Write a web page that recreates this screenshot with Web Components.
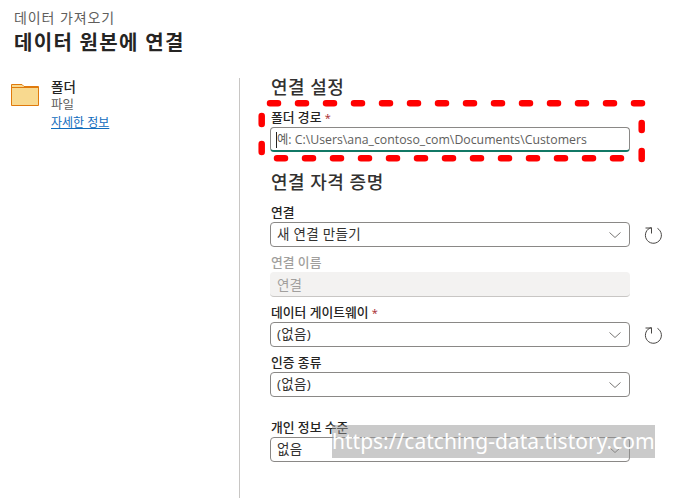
<!DOCTYPE html>
<html lang="ko">
<head>
<meta charset="utf-8">
<title>데이터 원본에 연결</title>
<style>
  html, body { margin: 0; height: 100%; background: #fff; }
  body { font-family: "Open Sans", "Noto Sans CJK KR", sans-serif; color: #252423; overflow: hidden; }
</style>
</head>
<body>
<connect-page>
  <page-header slot="header" crumb="데이터 가져오기" title="데이터 원본에 연결"></page-header>
  <source-card slot="side" name="폴더" kind="파일" link="자세한 정보"></source-card>

  <section-title style="line-height:18px">연결 설정</section-title>
  <form-field label="폴더 경로" required style="margin-top:11px">
    <text-input placeholder="예: C:\Users\ana_contoso_com\Documents\Customers" active></text-input>
  </form-field>

  <section-title style="margin-top:19px">연결 자격 증명</section-title>
  <form-field label="연결" style="margin-top:9px">
    <select-box value="새 연결 만들기" refresh></select-box>
  </form-field>
  <form-field label="연결 이름" disabled style="margin-top:5px">
    <text-input value="연결" disabled></text-input>
  </form-field>
  <form-field label="데이터 게이트웨이" required style="margin-top:5px">
    <select-box value="(없음)" refresh></select-box>
  </form-field>
  <form-field label="인증 종류" style="margin-top:5px">
    <select-box value="(없음)"></select-box>
  </form-field>
  <form-field label="개인 정보 수준" style="margin-top:20px">
    <select-box value="없음"></select-box>
  </form-field>

  <red-callout slot="overlay"></red-callout>
  <water-mark slot="overlay">https://catching-data.tistory.com</water-mark>
</connect-page>

<script>
  class ConnectPage extends HTMLElement {
    constructor() {
      super();
      this.attachShadow({ mode: 'open' });
      this.shadowRoot.innerHTML = `
        <style>
          :host { display: block; position: relative; width: 695px; height: 498px; overflow: hidden; }
          .body { display: grid; grid-template-columns: 239px 1fr; height: 420px; }
          .side { padding: 0 0 0 11px; }
          .form { border-left: 1px solid #c8c6c4; padding: 0 0 0 30px; }
        </style>
        <slot name="header"></slot>
        <div class="body">
          <div class="side"><slot name="side"></slot></div>
          <div class="form"><slot></slot></div>
        </div>
        <slot name="overlay"></slot>
      `;
    }
  }
  customElements.define('connect-page', ConnectPage);

  class PageHeader extends HTMLElement {
    constructor() {
      super();
      this.attachShadow({ mode: 'open' });
    }
    connectedCallback() {
      this.shadowRoot.innerHTML = `
        <style>
          :host { display: block; height: 78px; box-sizing: border-box; padding: 9px 0 0 14px; }
          .crumb { font-size: 14px; letter-spacing: .9px; line-height: 18px; color: #605e5c; }
          h1 { margin: 3px 0 0; font-size: 20px; letter-spacing: 1.300px; line-height: 25px; font-weight: 700; color: #252423; }
        </style>
        <div class="crumb">${this.getAttribute('crumb')}</div>
        <h1>${this.getAttribute('title')}</h1>
      `;
    }
  }
  customElements.define('page-header', PageHeader);

  class SourceCard extends HTMLElement {
    constructor() {
      super();
      this.attachShadow({ mode: 'open' });
    }
    connectedCallback() {
      this.shadowRoot.innerHTML = `
        <style>
          :host { display: flex; gap: 12px; align-items: flex-start; }
          svg { display: block; margin-top: 6px; flex: none; }
          .name { font-size: 13.500px; line-height: 18px; font-weight: 500; color: #252423; }
          .kind { font-size: 12.500px; line-height: 18px; color: #605e5c; }
          a { display: block; font-size: 12px; line-height: 17px; color: #0f6cbd; text-decoration: underline; }
        </style>
        <svg width="28" height="22" viewBox="0 0 28 22">
          <path d="M.5 21.500V.5h10.500l2 2h14.500v19z" fill="#f8d98f" stroke="#e07a0c"/>
          <path d="M.5 3.500h26.500" stroke="#e07a0c" fill="none"/>
        </svg>
        <div>
          <div class="name">${this.getAttribute('name')}</div>
          <div class="kind">${this.getAttribute('kind')}</div>
          <a href="#">${this.getAttribute('link')}</a>
        </div>
      `;
    }
  }
  customElements.define('source-card', SourceCard);

  class SectionTitle extends HTMLElement {
    constructor() {
      super();
      this.attachShadow({ mode: 'open' });
      this.shadowRoot.innerHTML = `
        <style>
          :host { display: block; padding-left: 1px; font-size: 18px; letter-spacing: .5px; line-height: 22px; font-weight: 500; color: #323130; }
        </style>
        <slot></slot>
      `;
    }
  }
  customElements.define('section-title', SectionTitle);

  class FormField extends HTMLElement {
    constructor() {
      super();
      this.attachShadow({ mode: 'open' });
    }
    connectedCallback() {
      const star = this.hasAttribute('required') ? ' <span>*</span>' : '';
      this.shadowRoot.innerHTML = `
        <style>
          :host { display: block; }
          label { display: block; padding-left: 1px; font-size: 12.800px; line-height: 20px; height: 20px; font-weight: 500; color: #252423; }
          :host([disabled]) label { color: #a19f9d; }
          span { color: #a4262c; font-size: 11px; }
        </style>
        <label>${this.getAttribute('label')}${star}</label>
        <slot></slot>
      `;
    }
  }
  customElements.define('form-field', FormField);

  class TextInput extends HTMLElement {
    constructor() {
      super();
      this.attachShadow({ mode: 'open' });
    }
    connectedCallback() {
      const text = this.getAttribute('value') || this.getAttribute('placeholder');
      this.shadowRoot.innerHTML = `
        <style>
          :host { display: block; width: 360px; height: 25px; box-sizing: border-box; padding: 0 6px;
            border: 1px solid #8a8886; border-radius: 4px; font-size: 12.300px; line-height: 24px;
            color: #605e5c; position: relative; white-space: nowrap; }
          :host([active]) { border-bottom: 2px solid #117865; }
          :host([active]) i { position: absolute; left: 5px; top: 4px; width: 1px; height: 16px; background: #252423; }
          :host([disabled]) { background: #f3f2f1; border: 0; border-bottom: 1px solid #c8c6c4; color: #a19f9d; padding: 0 7px; line-height: 26px; font-size: 13.500px; }
        </style>
        <i></i>${text}
      `;
    }
  }
  customElements.define('text-input', TextInput);

  class SelectBox extends HTMLElement {
    constructor() {
      super();
      this.attachShadow({ mode: 'open' });
    }
    connectedCallback() {
      const refresh = this.hasAttribute('refresh') ? `
        <svg class="refresh" width="20" height="20" viewBox="0 0 20 20" fill="none" stroke="#484644" stroke-width="1">
          <path d="M8.500 2.500A8 8 0 1 0 14.500 3.400"/>
          <path d="M2.500 3H8.500V8.500"/>
        </svg>` : '';
      this.shadowRoot.innerHTML = `
        <style>
          :host { display: flex; align-items: center; gap: 13px; }
          .box { flex: none; width: 360px; height: 25px; box-sizing: border-box; padding: 0 6px;
            border: 1px solid #8a8886; border-radius: 4px; display: flex; align-items: center;
            justify-content: space-between; font-size: 13.500px; letter-spacing: .3px; color: #323130; background: #fff; }
          .box span { position: relative; top: -1.500px; }
          .chev { display: block; margin-right: 1px; }
          .refresh { display: block; }
        </style>
        <div class="box">
          <span>${this.getAttribute('value')}</span>
          <svg class="chev" width="14" height="8" viewBox="0 0 14 8" fill="none" stroke="#797775">
            <path d="M1.500 1.500L7 6.500L12.500 1.500"/>
          </svg>
        </div>${refresh}
      `;
    }
  }
  customElements.define('select-box', SelectBox);

  class RedCallout extends HTMLElement {
    constructor() {
      super();
      this.attachShadow({ mode: 'open' });
      this.shadowRoot.innerHTML = `
        <style>
          :host { position: absolute; left: 255px; top: 95px; width: 395px; height: 72px; display: block; }
          svg { display: block; }
        </style>
        <svg width="395" height="72" viewBox="0 0 395 72" fill="none" stroke="#ff0000" stroke-width="6.500" stroke-linecap="round">
          <path d="M15 8.300H388" stroke-dasharray="8 20"/>
          <path d="M22 63.300H368" stroke-dasharray="8 20"/>
          <path d="M6.700 21V29M6.700 49V57"/>
          <path d="M386.700 28V35M386.700 56V64"/>
        </svg>
      `;
    }
  }
  customElements.define('red-callout', RedCallout);

  class WaterMark extends HTMLElement {
    constructor() {
      super();
      this.attachShadow({ mode: 'open' });
      this.shadowRoot.innerHTML = `
        <style>
          :host { position: absolute; left: 332px; top: 425px; width: 323px; height: 33px; display: block;
            background: rgba(150,150,150,.5); color: #fff; font-family: "Noto Sans", sans-serif;
            font-size: 21px; line-height: 33px; white-space: nowrap; overflow: hidden; }
        </style>
        <slot></slot>
      `;
    }
  }
  customElements.define('water-mark', WaterMark);
</script>
</body>
</html>
